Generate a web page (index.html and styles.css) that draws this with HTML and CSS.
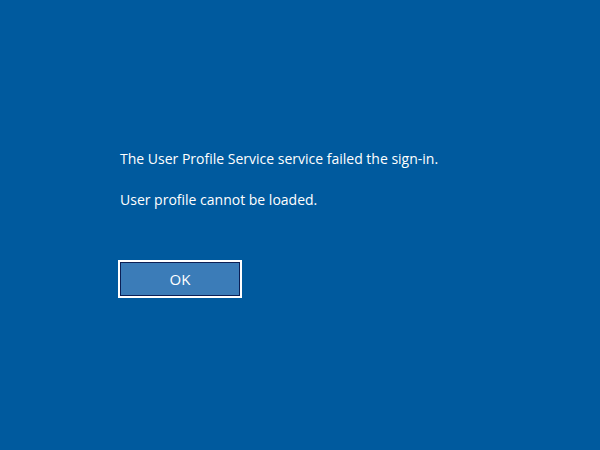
FILE: index.html
```html
<!DOCTYPE html>
<html>
<head>
<meta charset="utf-8">
<link rel="stylesheet" href="styles.css">
</head>
<body>
<div class="screen">
  <div class="dialog">
    <p class="msg">The User Profile Service service failed the sign-in.</p>
    <p class="msg">User profile cannot be loaded.</p>
    <button class="ok">OK</button>
  </div>
</div>
</body>
</html>
```
FILE: styles.css
```css
html, body {
  margin: 0;
  padding: 0;
  background: #005a9e;
}
.screen {
  width: 600px;
  height: 450px;
  background: #005a9e;
  font-family: "Open Sans", "Noto Sans", sans-serif;
  color: #ffffff;
}
.dialog {
  padding: 149px 0 0 120px;
  display: flex;
  flex-direction: column;
  align-items: flex-start;
}
.msg {
  margin: 0 0 21px 0;
  font-size: 14px;
  line-height: 20px;
}
.ok {
  margin: 29px 0 0 -2px;
  width: 124px;
  height: 38px;
  box-sizing: border-box;
  border: 2px solid #ffffff;
  outline: none;
  box-shadow: inset 0 0 0 1px #0b1f55;
  background: #3b7cb8;
  color: #ffffff;
  font-family: "Open Sans", "Noto Sans", sans-serif;
  font-size: 15px;
  padding: 0;
}
```
